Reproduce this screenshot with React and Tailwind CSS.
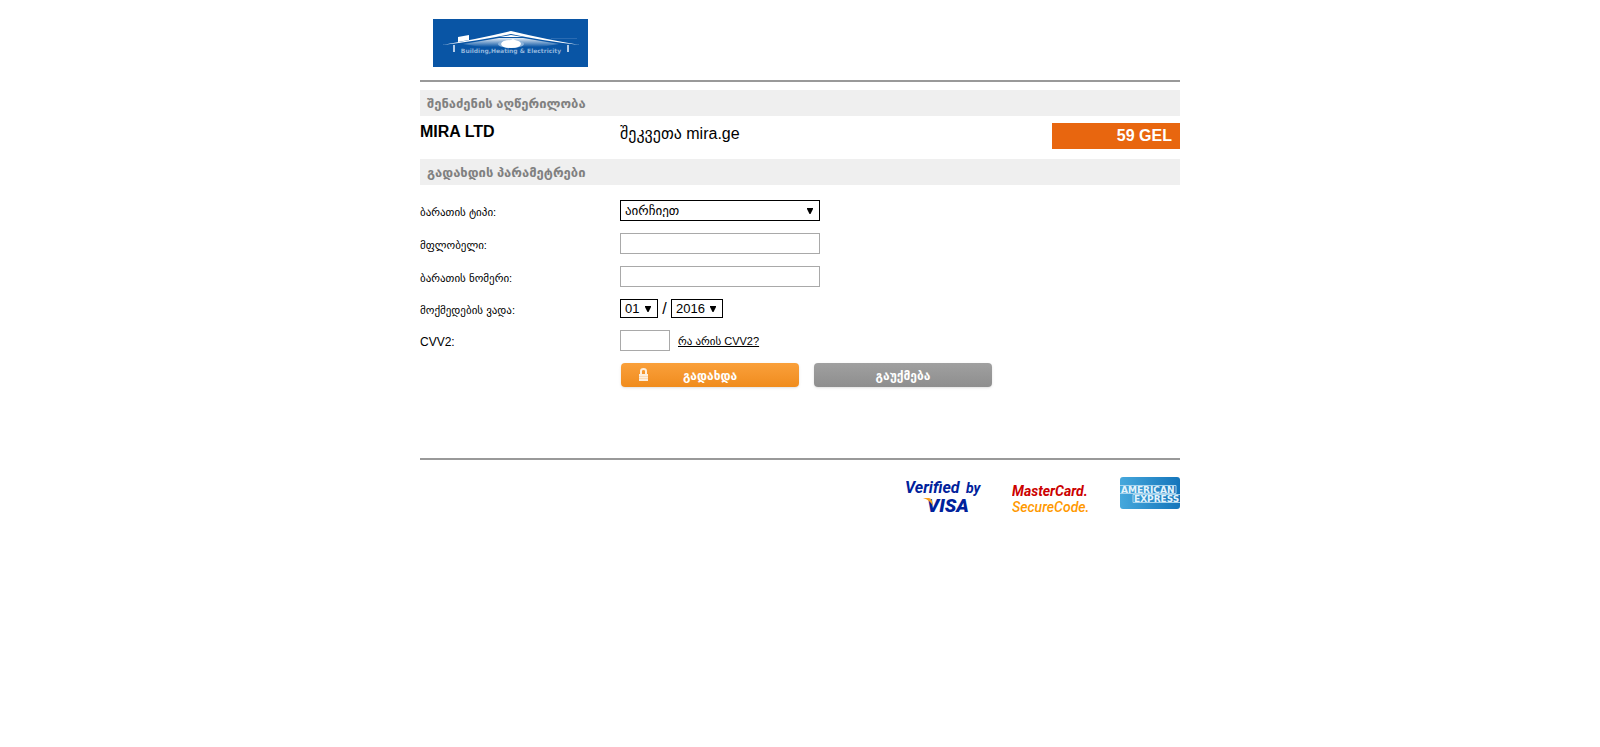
import React from 'react';
import clsx from 'clsx';

const fontStack = "font-['Liberation_Sans','DejaVu_Sans',sans-serif]";

const Arrow = () => (
  <svg viewBox="0 0 6 6" className="pointer-events-none absolute right-[7px] top-1/2 size-1.5 -translate-y-1/2" aria-hidden="true">
    <path d="M0 0h6v1L3.500 6h-1L0 1z" fill="#000" />
  </svg>
);

const Select = ({ className, options, ...props }) => (
  <span className={clsx('relative inline-block', className)}>
    <select
      className="block h-full w-full appearance-none border border-black bg-white pl-1 text-[13px] leading-none text-black"
      {...props}
    >
      {options.map((option) => (
        <option key={option}>{option}</option>
      ))}
    </select>
    <Arrow />
  </span>
);

const SectionTitle = ({ children }) => (
  <h2 className="bg-[#efefef] px-[7px] pt-[5px] pb-1 text-[13px] leading-[17px] font-bold text-[#808080]">{children}</h2>
);

const Row = ({ label, htmlFor, children }) => (
  <div className="flex items-center">
    <label htmlFor={htmlFor} className="w-[200px] pt-1 text-[11px] leading-[15px]">
      {label}
    </label>
    {children}
  </div>
);

const inputClass = 'h-[21px] border border-[#a9a9a9] bg-white px-1 text-[13px]';

const CompanyLogo = () => (
  <svg viewBox="0 0 155 48" className="h-12 w-[155px]" role="img" aria-label="Building, Heating and Electricity">
    <defs>
      <linearGradient id="roofGlow" x1="0" y1="0" x2="0" y2="1">
        <stop offset="0" stopColor="#fff" stopOpacity="0.9" />
        <stop offset="1" stopColor="#fff" stopOpacity="0" />
      </linearGradient>
    </defs>
    <rect width="155" height="48" fill="#0955a5" />
    <path d="M66 19H90L126 25 108 28H48L30 25z" fill="url(#roofGlow)" />
    <path d="M9 26Q45 20 78 12q33 8 69 14Q110 22 78 15 45 22 9 26z" fill="#fff" />
    <path d="M118 19.500h26" stroke="#2a6bb2" strokeWidth="1" />
    <path d="M25 18l11-2v5l-11 2z" fill="#fff" />
    <path d="M66 18l12-2 12 2z" fill="#fff" />
    <ellipse cx="78" cy="25" rx="13" ry="4" fill="#8db3da" />
    <path d="M68 25q1-4 10-4l2-1 2 1q6 1 6 4-1 4-10 4t-10-4z" fill="#fff" />
    <path d="M21 26v7M135 26v7" stroke="#b5cde8" strokeWidth="2" />
    <text x="78" y="34" textAnchor="middle" fontSize="6" fontWeight="700" fill="#8fb4dc" className="font-['DejaVu_Sans',sans-serif]">
      Building,Heating &amp; Electricity
    </text>
  </svg>
);

const VerifiedByVisa = () => (
  <svg viewBox="0 0 78 40" className="h-10 w-[78px]" role="img" aria-label="Verified by Visa">
    <g fill="#00219b" className="font-['Roboto',sans-serif]" fontStyle="italic" fontWeight="700">
      <text x="-1" y="16" fontSize="16">Verified</text>
      <text x="60" y="16" fontSize="14">by</text>
      <text x="21" y="35" fontSize="19" fontWeight="900">VISA</text>
    </g>
    <path d="M17 21h6q2 0 3 3l1 5q-3-6-10-8z" fill="#f9a01b" />
  </svg>
);

const MasterCardSecureCode = () => (
  <svg viewBox="0 0 80 36" className="h-9 w-20" role="img" aria-label="MasterCard SecureCode">
    <g className="font-['Roboto',sans-serif]" fontStyle="italic" fontSize="14">
      <text x="0" y="15" fontWeight="700" fill="#cc0000">MasterCard.</text>
      <text x="0" y="31" fontWeight="500" fill="#ff9900">SecureCode.</text>
    </g>
  </svg>
);

const AmericanExpress = () => (
  <svg viewBox="0 0 60 32" className="h-8 w-[60px]" role="img" aria-label="American Express">
    <defs>
      <linearGradient id="amexBlue" x1="0" y1="0" x2="1" y2="0">
        <stop offset="0" stopColor="#46a8dc" />
        <stop offset="1" stopColor="#1475bb" />
      </linearGradient>
    </defs>
    <rect width="60" height="32" rx="3" fill="url(#amexBlue)" />
    <path d="M0 8.500h56v8H0M60 17.500H13v8h47" fill="none" stroke="#a5d3ee" />
    <g fill="#e4f3fb" fontSize="9" fontWeight="700" className="font-['DejaVu_Sans',sans-serif]">
      <text x="1" y="16">AMERICAN</text>
      <text x="14" y="25">EXPRESS</text>
    </g>
  </svg>
);

const App = () => {
  return (
    <div className={clsx('mx-auto max-w-[760px] text-black', fontStack)}>
      <header className="border-b-2 border-[#999] px-[13px] pt-[19px] pb-[13px]">
        <CompanyLogo />
      </header>

      <main className="pt-2">
        <SectionTitle>შენაძენის აღწერილობა</SectionTitle>
        <div className="flex items-start pt-[7px] pb-2.5 text-base leading-[26px]">
          <h1 className="w-[200px] leading-[18px] font-bold">MIRA LTD</h1>
          <p className="grow leading-[22px]">შეკვეთა mira.ge</p>
          <p className="w-32 bg-[#e8660f] pr-2 text-right font-bold text-white">59 GEL</p>
        </div>
        <SectionTitle>გადახდის პარამეტრები</SectionTitle>

        <form className="flex flex-col gap-3 pt-[15px]" onSubmit={(e) => e.preventDefault()}>
          <Row label="ბარათის ტიპი:" htmlFor="cardType">
            <Select id="cardType" className="h-[21px] w-[200px]" options={['აირჩიეთ']} />
          </Row>
          <Row label="მფლობელი:" htmlFor="owner">
            <input id="owner" type="text" className={clsx(inputClass, 'w-[200px]')} />
          </Row>
          <Row label="ბარათის ნომერი:" htmlFor="cardNumber">
            <input id="cardNumber" type="text" className={clsx(inputClass, 'w-[200px]')} />
          </Row>
          <Row label="მოქმედების ვადა:" htmlFor="month">
            <Select id="month" className="h-[19px] w-[38px]" options={['01']} />
            <span className="w-[13px] text-center text-base leading-[19px]">/</span>
            <Select aria-label="Year" className="h-[19px] w-[52px]" options={['2016']} />
          </Row>
          <Row label={<span className="block text-xs leading-[15px]">CVV2:</span>} htmlFor="cvv">
            <input id="cvv" type="text" className={clsx(inputClass, 'w-[50px]')} />
            <a href="#cvv" className="ml-2 text-[11px] leading-4 underline">რა არის CVV2?</a>
          </Row>
          <div className="flex gap-[15px] pl-[201px] text-xs font-bold text-white">
            <button type="submit" className="flex h-6 w-[178px] items-center rounded bg-linear-to-b from-[#faa03a] to-[#f08c1c] shadow-sm">
              <svg viewBox="0 0 9 14" className="ml-[18px] h-3.5 w-[9px]" aria-hidden="true">
                <path d="M2 7V3q0-2 2.500-2T7 3v4" fill="none" stroke="#fdeedd" strokeWidth="2" />
                <path d="M0 6h9v7H0z" fill="#fdeedd" />
                <path d="M0 8.500h9M0 10.500h9" stroke="#f8c68c" strokeWidth="0.500" />
              </svg>
              <span className="grow pr-[27px] pt-0.5">გადახდა</span>
            </button>
            <button type="button" className="h-6 w-[178px] rounded bg-linear-to-b from-[#a0a0a0] to-[#8e8e8e] pt-0.5 shadow-sm">
              გაუქმება
            </button>
          </div>
        </form>
      </main>

      <footer className="mt-[71px] flex items-start justify-end border-t-2 border-[#999] pt-[17px]">
        <div className="mr-7"><VerifiedByVisa /></div>
        <div className="mr-7 pt-1"><MasterCardSecureCode /></div>
        <AmericanExpress />
      </footer>
    </div>
  );
};

export default App;
